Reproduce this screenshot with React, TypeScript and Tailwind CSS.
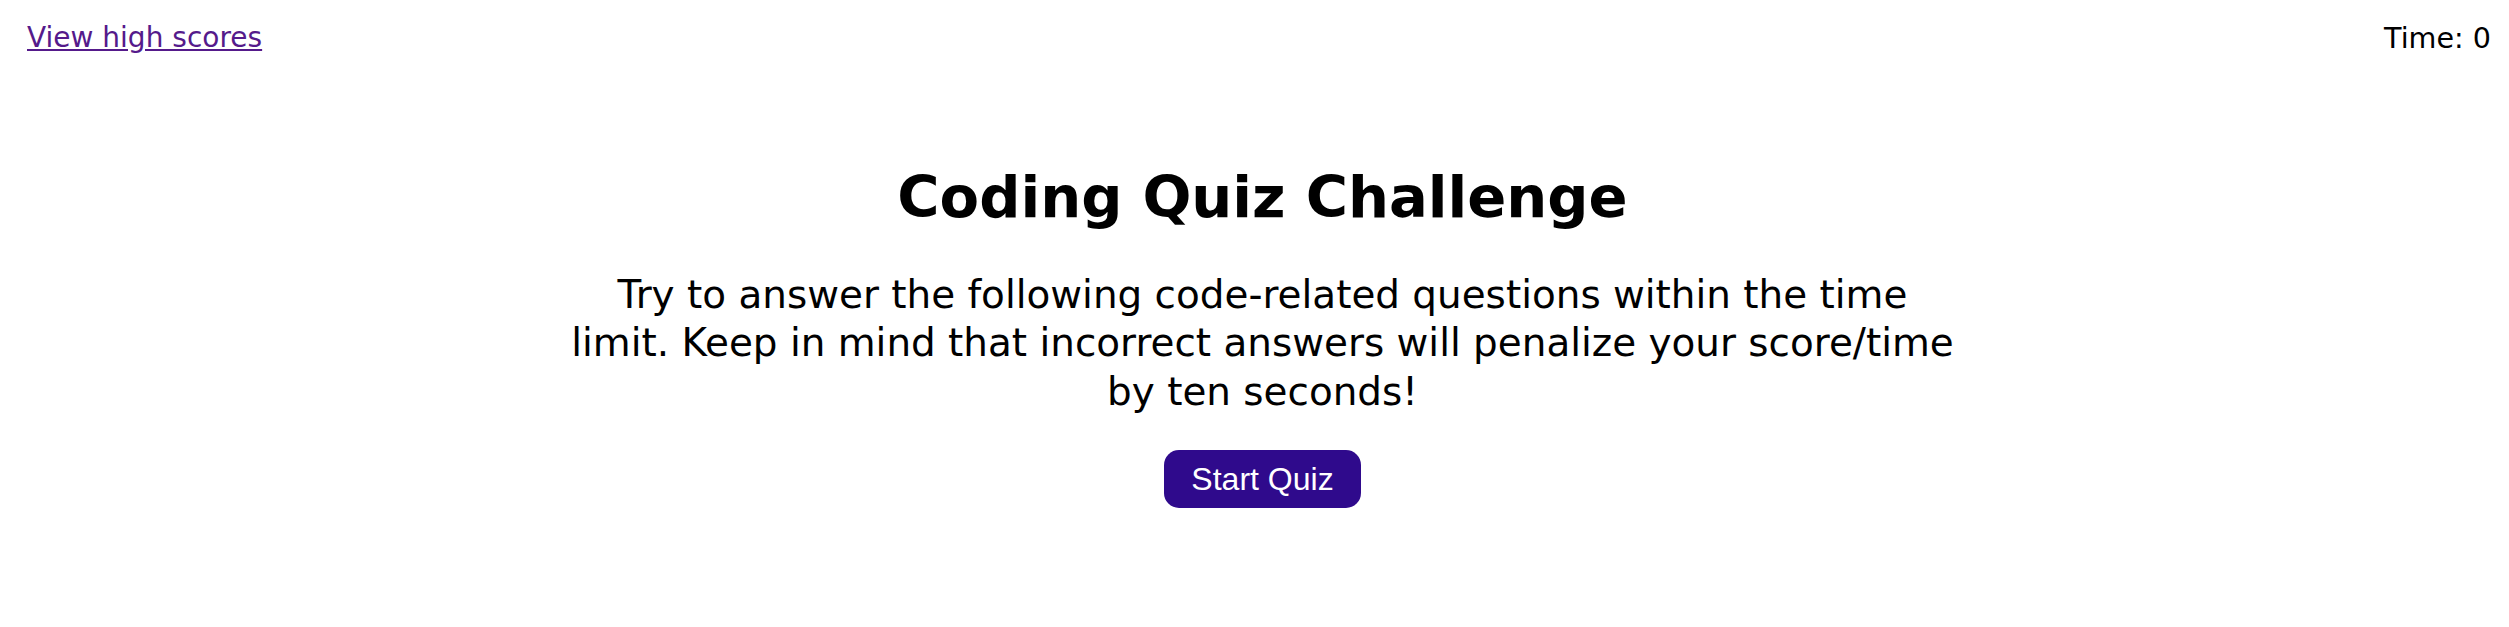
import React from 'react'

const App = () => {
  return (
    <div className="min-h-screen bg-white text-black">
      {/* header */}
      <header className="flex justify-between items-start pl-[27px] pr-[18px] pt-[22px] font-['DejaVu_Sans',Verdana,sans-serif] text-[28px] leading-[32.6px]">
        <a href="#" className="text-[#551a8b] underline">View high scores</a>
        <div className="text-[28.6px]">Time: 0</div>
      </header>

      {/* start screen */}
      <main className="flex flex-col items-center pl-[16px] font-['DejaVu_Sans',Verdana,sans-serif]">
        <h1 className="mt-[109px] text-[57.6px] leading-[67px] font-bold">Coding Quiz Challenge</h1>
        <p className="mt-[40px] w-[1392px] text-center text-[38.9px] leading-[48.8px]">
          Try to answer the following code-related questions within the time limit. Keep in mind that incorrect answers will penalize your score/time by ten seconds!
        </p>
        <button className="mt-[33px] h-[58px] px-[27px] rounded-[15px] bg-[#2f0a8c] text-white text-[32px] font-['Liberation_Sans',Arial,sans-serif]">
          Start Quiz
        </button>
      </main>
    </div>
  )
}

export default App
